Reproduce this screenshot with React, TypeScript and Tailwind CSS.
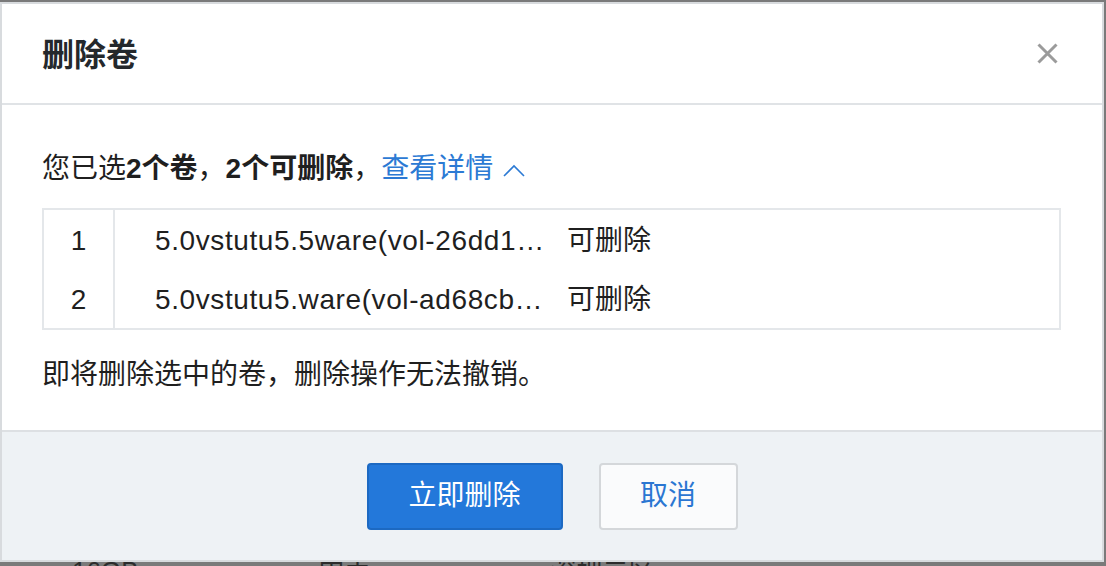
const rows = [
  { no: 1, name: '5.0vstutu5.5ware(vol-26dd1…', status: '可删除' },
  { no: 2, name: '5.0vstutu5.ware(vol-ad68cb…', status: '可删除' },
];

export default function App() {
  return (
    <div className="relative w-[1106px] h-[566px] overflow-hidden bg-[#7a7a7a] font-['Liberation_Sans','Noto_Sans_CJK_SC',sans-serif]">
      {/* page behind the modal, only the tops of its text peek out */}
      <div className="absolute left-0 top-[556px] flex h-[30px] items-start text-[26px] leading-[30px] text-[#2c2c2c]">
        <span className="ml-[72px]">16GB</span>
        <span className="ml-[180px]">中南</span>
        <span className="ml-[180px]">深圳二区</span>
        <span className="ml-[400px]">v</span>
      </div>

      <div className="absolute left-0 top-[2px] flex h-[560px] w-[1104px] flex-col border-2 border-[#d8dbde] bg-white">
        <div className="flex h-[101px] shrink-0 items-center justify-between border-b-2 border-[#e0e3e6] pl-[40px] pr-[44px]">
          <h2 className="mt-[2px] text-[32px] font-bold text-[#24282c]">删除卷</h2>
          <svg width="21" height="21" viewBox="0 0 21 21" fill="none" className="mt-[-1px]">
            <path d="M1.5 1.5 L19.5 19.5 M19.5 1.5 L1.5 19.5" stroke="#9b9b9b" strokeWidth="3" />
          </svg>
        </div>

        <div className="flex-1 pl-[40px] pr-[41px] text-[28px] text-[#1f1f1f]">
          <div className="mt-[44px] flex h-[40px] items-center leading-[40px]">
            <span>您已选</span>
            <span className="font-bold">2个卷</span>
            <span>，</span>
            <span className="font-bold">2个可删除</span>
            <span>，</span>
            <span className="text-[#2c7ad4]">查看详情</span>
            <svg className="ml-[10px] mt-[2px]" width="22" height="13" viewBox="0 0 22 13" fill="none">
              <polyline points="1,12 11,2 21,12" stroke="#2c7ad4" strokeWidth="1.6" />
            </svg>
          </div>

          <div className="mt-[19px] border-2 border-[#e4e7ea]">
            {rows.map((r) => (
              <div key={r.no} className="flex h-[59px]">
                <div className="flex w-[71px] items-center justify-center border-r-2 border-[#e4e7ea] pt-[3px]">
                  {r.no}
                </div>
                <div className="flex w-[452px] items-center whitespace-nowrap pl-[40px] pt-[3px] tracking-[0.6px]">
                  {r.name}
                </div>
                <div className="flex items-center pt-[3px]">{r.status}</div>
              </div>
            ))}
          </div>

          <p className="mt-[25px] leading-[40px]">即将删除选中的卷，删除操作无法撤销。</p>
        </div>

        <div className="flex h-[130px] shrink-0 items-center justify-center gap-[36px] border-t-2 border-[#dde0e3] bg-[#eef2f5]">
          <button className="h-[67px] w-[196px] rounded-[4px] border-2 border-[#1c69c2] bg-[#2378da] text-[28px] text-white">
            立即删除
          </button>
          <button className="h-[67px] w-[139px] rounded-[4px] border-2 border-[#d4d7da] bg-[#fafbfc] text-[28px] text-[#2a76d2]">
            取消
          </button>
        </div>
      </div>
    </div>
  );
}
